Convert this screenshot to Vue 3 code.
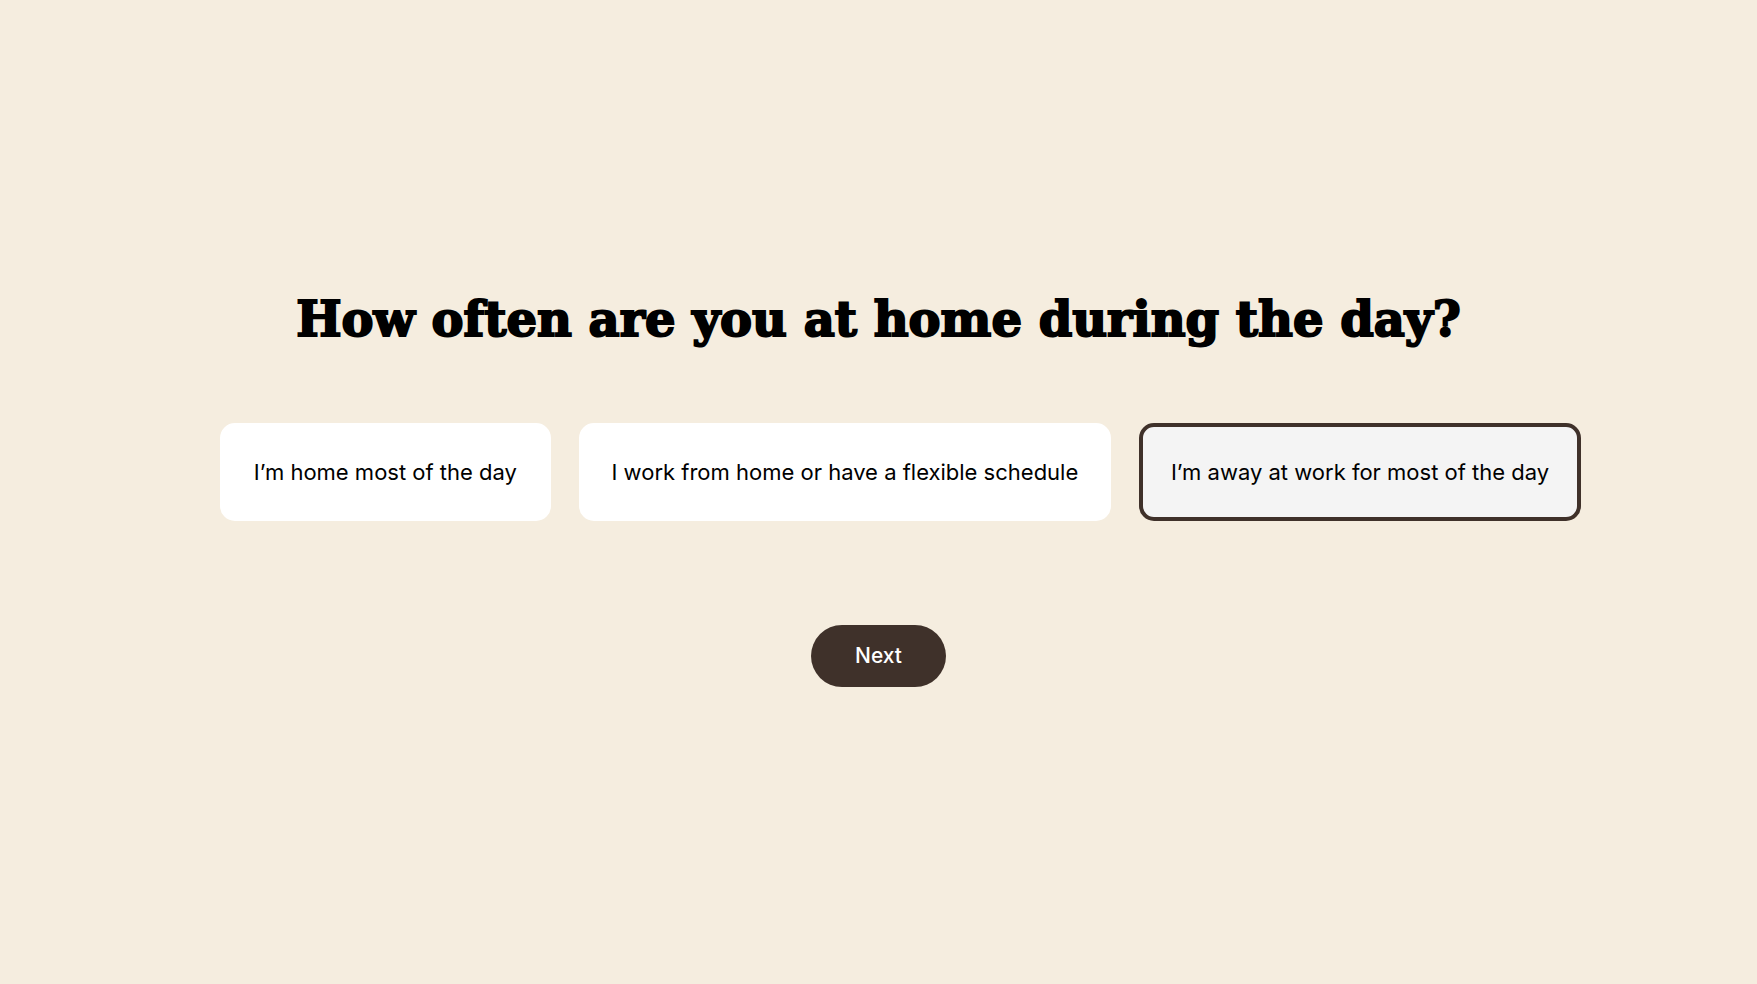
<script setup>
import { ref } from 'vue'

const options = [
  { id: 'home', label: 'I’m home most of the day' },
  { id: 'flexible', label: 'I work from home or have a flexible schedule' },
  { id: 'away', label: 'I’m away at work for most of the day' },
]
const selected = ref('away')
</script>

<template>
  <main class="page">
    <form class="quiz" @submit.prevent>
      <h1 id="question" class="question">How often are you at home during the day?</h1>
      <div class="options" role="radiogroup" aria-labelledby="question">
        <label
          v-for="option in options"
          :key="option.id"
          class="option"
          :class="{ selected: selected === option.id }"
          :for="option.id"
        >
          <input :id="option.id" v-model="selected" class="radio" type="radio" name="presence" :value="option.id" />
          <span>{{ option.label }}</span>
        </label>
      </div>
      <button class="next" type="submit">Next</button>
    </form>
  </main>
</template>

<style>
body {
  margin: 0;
  background: #f5eddf;
}
</style>

<style scoped>
.page {
  display: flex;
  align-items: center;
  min-height: 100vh;
  color: #000;
  font-family: Inter, "Liberation Sans", sans-serif;
}
.quiz {
  display: flex;
  flex-direction: column;
  align-items: center;
  width: 100%;
}
.question {
  margin: 0 0 82px;
  font-family: "DejaVu Serif", serif;
  font-size: 48px;
  font-weight: 700;
  line-height: 44px;
  text-align: center;
  -webkit-text-stroke: 2px #000;
}
.options {
  box-sizing: border-box;
  display: grid;
  grid-template-columns: 331fr 531fr 442fr;
  gap: 28px;
  width: 100%;
  margin-bottom: 104px;
  padding: 0 10% 0 12.5%;
}
.option {
  position: relative;
  display: flex;
  align-items: center;
  justify-content: center;
  padding: 31px 20px;
  border: 4px solid #fff;
  border-radius: 15px;
  background: #fff;
  font-size: 22px;
  line-height: 28px;
  text-align: center;
  cursor: pointer;
}
.option.selected {
  border-color: #3f312a;
  background: #f4f4f4;
}
.option:has(:focus-visible) {
  outline: 2px solid #3f312a;
  outline-offset: 3px;
}
.radio {
  position: absolute;
  opacity: 0;
  pointer-events: none;
}
.next {
  padding: 16px 44px;
  border: 0;
  border-radius: 31px;
  background: #3f312a;
  color: #fff;
  font-family: inherit;
  font-size: 21px;
  font-weight: 500;
  line-height: 30px;
  cursor: pointer;
}
</style>
